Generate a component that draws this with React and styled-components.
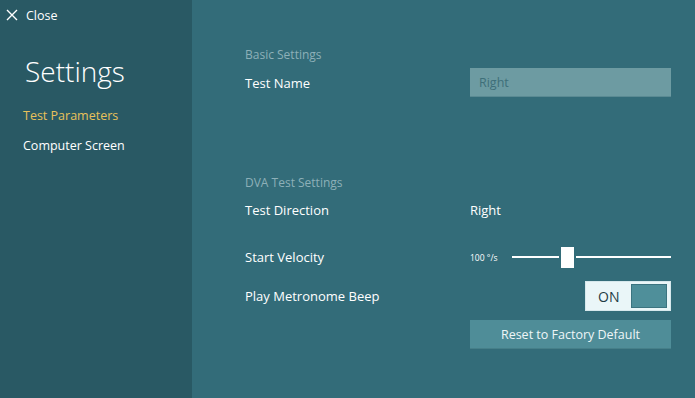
import React from 'react'
import styled, { createGlobalStyle } from 'styled-components'

const Global = createGlobalStyle`
  html, body { margin: 0; padding: 0; }
  body {
    font-family: "Open Sans", "Noto Sans", sans-serif;
    background: #336c79;
  }
`

const App = () => {
  return (
    <>
      <Global />
      <Page>
        <Sidebar>
          <CloseBtn>
            <svg width="12" height="12" viewBox="0 0 12 12">
              <path d="M1 1 L11 11 M11 1 L1 11" stroke="#fff" strokeWidth="1.4" fill="none" />
            </svg>
            <span>Close</span>
          </CloseBtn>
          <Title>Settings</Title>
          <NavItem active>Test Parameters</NavItem>
          <NavItem>Computer Screen</NavItem>
        </Sidebar>
        <Main>
          <SectionHead>Basic Settings</SectionHead>
          <Row h={29} mt={3}>
            <Label>Test Name</Label>
            <TextBox>Right</TextBox>
          </Row>
          <SectionHead mt={76}>DVA Test Settings</SectionHead>
          <Row h={28} mt={3}>
            <Label>Test Direction</Label>
            <Label>Right</Label>
          </Row>
          <Row h={28} mt={19}>
            <Label>Start Velocity</Label>
            <SliderWrap>
              <Small>100 °/s</Small>
              <Track>
                <Line />
                <Thumb />
                <Line />
              </Track>
            </SliderWrap>
          </Row>
          <Row h={30} mt={10}>
            <Label>Play Metronome Beep</Label>
            <ToggleCell>
              <Toggle>
                <span>ON</span>
                <Knob />
              </Toggle>
            </ToggleCell>
          </Row>
          <Row h={29} mt={9}>
            <span />
            <Button>Reset to Factory Default</Button>
          </Row>
        </Main>
      </Page>
    </>
  )
}

export default App

const Page = styled.div`
  display: flex;
  width: 695px;
  height: 398px;
  overflow: hidden;
`

const Sidebar = styled.div`
  width: 192px;
  flex-shrink: 0;
  background: #295964;
  display: flex;
  flex-direction: column;
`

const CloseBtn = styled.div`
  display: flex;
  align-items: center;
  gap: 8px;
  height: 16px;
  padding: 7px 0 0 6px;
  color: #fff;
  font-size: 12.5px;
`

const Title = styled.div`
  margin: 28px 0 0 25px;
  font-size: 28px;
  font-weight: 300;
  color: #fff;
  height: 40px;
  line-height: 40px;
`

const NavItem = styled.div`
  padding-left: 23px;
  height: 30px;
  line-height: 30px;
  font-size: 12.5px;
  color: ${p => (p.active ? '#e8c15a' : '#fff')};
  ${p => p.active && 'margin-top: 10px;'}
`

const Main = styled.div`
  flex: 1;
  padding: 45px 24px 0 53px;
  display: flex;
  flex-direction: column;
`

const SectionHead = styled.div`
  height: 20px;
  line-height: 20px;
  margin-top: ${p => p.mt || 0}px;
  font-size: 12px;
  color: #8db0b8;
`

const Row = styled.div`
  display: grid;
  grid-template-columns: 225px 201px;
  align-items: center;
  height: ${p => p.h}px;
  margin-top: ${p => p.mt}px;
`

const Label = styled.div`
  font-size: 13px;
  color: #fff;
`

const TextBox = styled.div`
  height: 29px;
  box-sizing: border-box;
  background: #6d9ba2;
  border-bottom: 1px solid #5a8a93;
  padding-left: 9px;
  line-height: 29px;
  font-size: 12.5px;
  color: #3e6f79;
`

const SliderWrap = styled.div`
  display: flex;
  align-items: center;
`

const Small = styled.span`
  font-size: 8.5px;
  color: #fff;
  width: 42px;
`

const Track = styled.div`
  flex: 1;
  display: flex;
  align-items: center;
  gap: 2px;
`

const Line = styled.div`
  height: 2px;
  background: #fff;
  flex: 1;
  &:first-child { flex: 0 0 47px; }
`

const Thumb = styled.div`
  width: 13px;
  height: 21px;
  background: #fff;
`

const ToggleCell = styled.div`
  display: flex;
  justify-content: flex-end;
`

const Toggle = styled.div`
  width: 86px;
  height: 30px;
  box-sizing: border-box;
  background: #eaf6f8;
  border: 1px solid #d6e8ec;
  display: flex;
  align-items: center;
  justify-content: space-between;
  padding: 0 3px 0 12px;
  font-size: 14px;
  color: #1f3c44;
`

const Knob = styled.div`
  width: 36px;
  height: 24px;
  box-sizing: border-box;
  background: #4f8f9a;
  border: 1px solid #3b7480;
`

const Button = styled.div`
  height: 29px;
  background: #4f8d98;
  border-bottom: 1px solid #467f89;
  box-sizing: border-box;
  display: flex;
  align-items: center;
  justify-content: center;
  font-size: 12.5px;
  color: #eef6f7;
`
